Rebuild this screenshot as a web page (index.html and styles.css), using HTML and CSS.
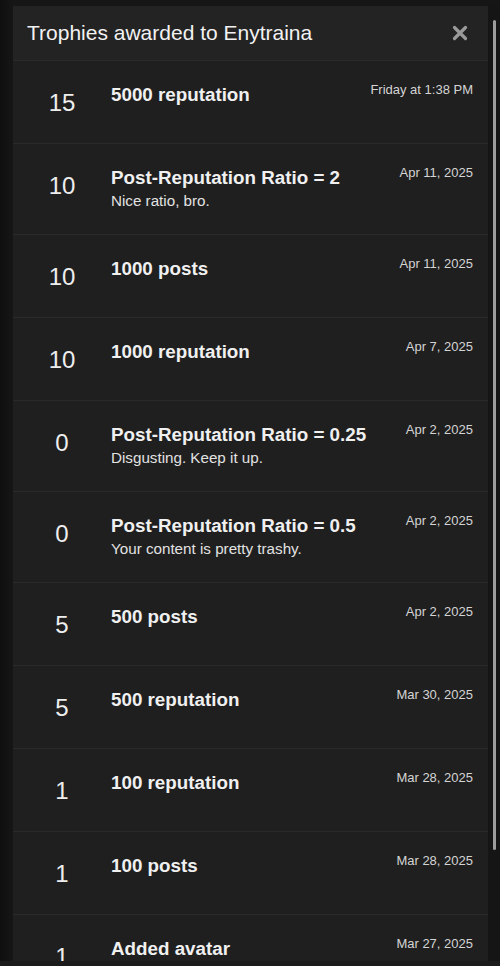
FILE: index.html
```html
<!DOCTYPE html>
<html lang="en">
<head>
    <meta charset="UTF-8">
    <meta name="viewport" content="width=device-width, initial-scale=1.0">
    <title>Trophies awarded to Enytraina</title>
    <link rel="stylesheet" href="styles.css">
</head>
<body>

    <div class="page">
        <div class="modal">
            <div class="modal-header">
                <h2>Trophies awarded to Enytraina</h2>
                <button class="close-btn" aria-label="Close">
                    <svg width="16" height="16" viewBox="0 0 16 16">
                        <path d="M2.5 2.5 L13.5 13.5 M13.5 2.5 L2.5 13.5" stroke="#9a9a9a" stroke-width="3.2" stroke-linecap="round"/>
                    </svg>
                </button>
            </div>

            <ul class="trophy-list">
                <li class="trophy">
                    <div class="points">15</div>
                    <div class="info">
                        <h3>5000 reputation</h3>
                    </div>
                    <div class="date">Friday at 1:38 PM</div>
                </li>
                <li class="trophy">
                    <div class="points">10</div>
                    <div class="info">
                        <h3>Post-Reputation Ratio = 2</h3>
                        <p>Nice ratio, bro.</p>
                    </div>
                    <div class="date">Apr 11, 2025</div>
                </li>
                <li class="trophy">
                    <div class="points">10</div>
                    <div class="info">
                        <h3>1000 posts</h3>
                    </div>
                    <div class="date">Apr 11, 2025</div>
                </li>
                <li class="trophy">
                    <div class="points">10</div>
                    <div class="info">
                        <h3>1000 reputation</h3>
                    </div>
                    <div class="date">Apr 7, 2025</div>
                </li>
                <li class="trophy">
                    <div class="points">0</div>
                    <div class="info">
                        <h3>Post-Reputation Ratio = 0.25</h3>
                        <p>Disgusting. Keep it up.</p>
                    </div>
                    <div class="date">Apr 2, 2025</div>
                </li>
                <li class="trophy">
                    <div class="points">0</div>
                    <div class="info">
                        <h3>Post-Reputation Ratio = 0.5</h3>
                        <p>Your content is pretty trashy.</p>
                    </div>
                    <div class="date">Apr 2, 2025</div>
                </li>
                <li class="trophy">
                    <div class="points">5</div>
                    <div class="info">
                        <h3>500 posts</h3>
                    </div>
                    <div class="date">Apr 2, 2025</div>
                </li>
                <li class="trophy">
                    <div class="points">5</div>
                    <div class="info">
                        <h3>500 reputation</h3>
                    </div>
                    <div class="date">Mar 30, 2025</div>
                </li>
                <li class="trophy">
                    <div class="points">1</div>
                    <div class="info">
                        <h3>100 reputation</h3>
                    </div>
                    <div class="date">Mar 28, 2025</div>
                </li>
                <li class="trophy">
                    <div class="points">1</div>
                    <div class="info">
                        <h3>100 posts</h3>
                    </div>
                    <div class="date">Mar 28, 2025</div>
                </li>
                <li class="trophy">
                    <div class="points">1</div>
                    <div class="info">
                        <h3>Added avatar</h3>
                    </div>
                    <div class="date">Mar 27, 2025</div>
                </li>
            </ul>
        </div>

        <div class="scroll-track">
            <div class="scroll-thumb"></div>
        </div>
    </div>

</body>
</html>
```

FILE: styles.css
```css
html, body {
    margin: 0;
    height: 100%;
    overflow: hidden;
}
body {
    font-family: "Liberation Sans", Arial, sans-serif;
    background-color: #1b1b1b;
    color: #f0f0f0;
}
.page {
    display: flex;
    height: 955px;
    padding: 6px 0 0 13px;
    background: linear-gradient(to right, #0f0f0f 0px, #161616 13px);
}
.modal {
    width: 475px;
    flex-shrink: 0;
    background-color: #1f1f1f;
    overflow: hidden;
}
.modal-header {
    display: flex;
    align-items: center;
    justify-content: space-between;
    height: 54px;
    padding: 0 20px 0 14px;
    background-color: #232323;
    border-bottom: 1px solid #2a2a2a;
}
.modal-header h2 {
    margin: 0;
    font-size: 21px;
    font-weight: normal;
    color: #f2f2f2;
}
.close-btn {
    border: none;
    background: none;
    padding: 0;
    display: flex;
    cursor: pointer;
}
.trophy-list {
    list-style: none;
    margin: 0;
    padding: 0;
}
.trophy {
    display: flex;
    align-items: flex-start;
    min-height: 38px;
    padding: 23px 15px 21px 0;
    border-bottom: 1px solid #2a2a2a;
}
.points {
    width: 98px;
    flex-shrink: 0;
    text-align: center;
    font-size: 24px;
    line-height: 28px;
    margin-top: 5px;
    color: #eeeeee;
}
.info {
    flex: 1;
}
.info h3 {
    margin: 0;
    font-size: 18.8px;
    line-height: 22px;
    font-weight: bold;
    color: #f0f0f0;
}
.info p {
    margin: 0;
    font-size: 15.2px;
    line-height: 24px;
    color: #e2e2e2;
}
.date {
    font-size: 13px;
    line-height: 16px;
    margin-top: -2px;
    color: #d4d4d4;
    white-space: nowrap;
}
.scroll-track {
    width: 12px;
    display: flex;
    justify-content: center;
    background-color: #151515;
}
.scroll-thumb {
    width: 3px;
    height: 830px;
    margin-top: 14px;
    border-radius: 2px;
    background-color: #9c9c9c;
}
```
